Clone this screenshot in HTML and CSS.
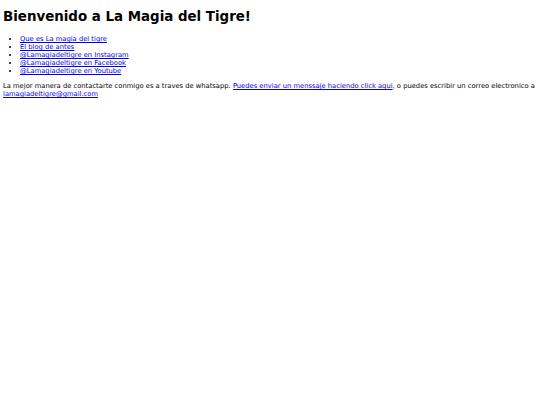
FILE: index.html
```html
<!DOCTYPE html>
<html lang="es">
<head>
<meta charset="utf-8">
<title>La Magia del Tigre</title>
<link rel="stylesheet" href="styles.css">
</head>
<body>
<h1 class="title">Bienvenido a La Magia del Tigre!</h1>
<ul class="links">
<li><a href="#">Que es La magia del tigre</a></li>
<li><a href="#">El blog de antes</a></li>
<li><a href="#">@Lamagiadeltigre en Instagram</a></li>
<li><a href="#">@Lamagiadeltigre en Facebook</a></li>
<li><a href="#">@Lamagiadeltigre en Youtube</a></li>
</ul>
<p class="contact">La mejor manera de contactarte conmigo es a traves de whatsapp. <a href="#">Puedes enviar un menssaje haciendo click aqui</a>, o puedes escribir un correo electronico a <a href="#">lamagiadeltigre@gmail.com</a></p>
</body>
</html>
```
FILE: styles.css
```css
body {
  margin: 0 3px;
  font-family: "DejaVu Sans", Verdana, sans-serif;
  font-size: 6.75px;
  line-height: 8px;
  color: #000;
  background: #fff;
}
.title {
  font-size: 13.4px;
  line-height: 16px;
  margin: 9px 0 10px;
}
.links {
  margin: 0;
  padding-left: 17px;
}
a {
  color: #0000ee;
}
.contact {
  margin: 7px 0;
}
```
